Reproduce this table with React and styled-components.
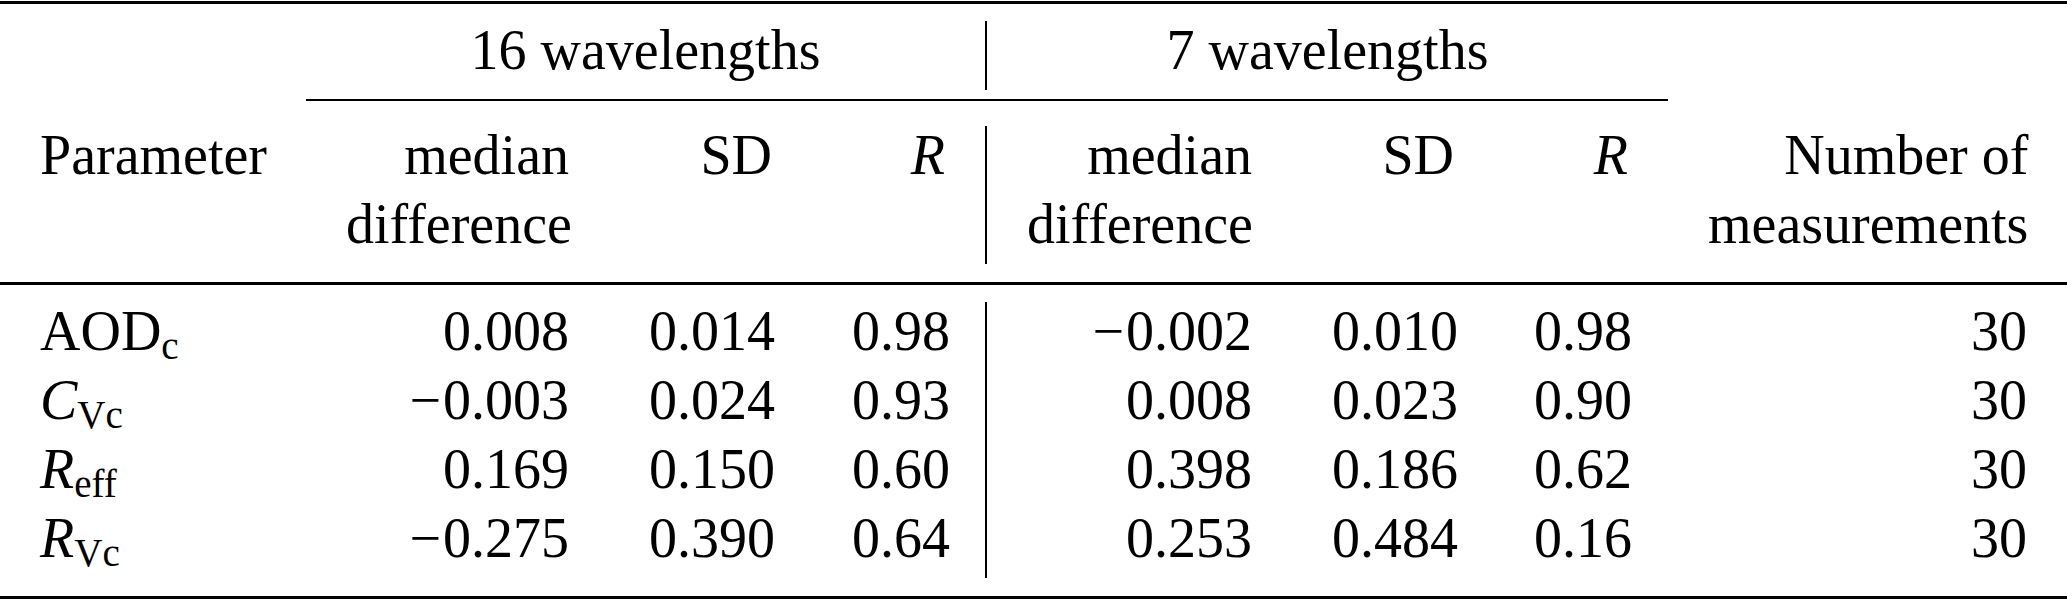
import styled, { createGlobalStyle } from 'styled-components'

const GlobalStyle = createGlobalStyle`
  html, body { margin:0; padding:0; background:#fff; }
  body { font-family:"Liberation Serif","Times New Roman",Times,serif; color:#000; }
`

const COLS = '306px 303px 203px 175px 305px 202px 174px 1fr'

const Table = styled.div`
  width:2067px;margin-top:1px;
  border-top:3px solid #000;border-bottom:3px solid #000;
  font-family:"Liberation Serif","Times New Roman",Times,serif;
  font-size:56px;
`
const Band = styled.div`
  display:grid;grid-template-columns:${COLS};
  padding:${p => p.$pad || '0'};
  border-bottom:${p => p.$rule ? '3px solid #000' : 'none'};
`
const Cell = styled.div`
  grid-column:${p => p.$span ? `span ${p.$span}` : 'auto'};
  padding:0 40px 11px;
  line-height:58px;
  text-align:${p => p.$align || 'right'};
  border-right:${p => p.$divider ? '2px solid #000' : 'none'};
  white-space:nowrap;
`
const Line = styled.div`
  & + & { margin-top:11px; }
`
const MidRule = styled.div`grid-column:2 / 8;height:2px;background:#000;`
const Var = styled.i`font-style:italic;`
const Sub = styled.sub`font-size:39px;line-height:0;vertical-align:-9px;`
const Minus = styled.span`margin-right:2px;`

const ROWS = [
  { key: 'aod', label: <>AOD<Sub>c</Sub></>, v: ['0.008', '0.014', '0.98', '-0.002', '0.010', '0.98', '30'] },
  { key: 'cvc', label: <><Var>C</Var><Sub>Vc</Sub></>, v: ['-0.003', '0.024', '0.93', '0.008', '0.023', '0.90', '30'] },
  { key: 'reff', label: <><Var>R</Var><Sub>eff</Sub></>, v: ['0.169', '0.150', '0.60', '0.398', '0.186', '0.62', '30'] },
  { key: 'rvc', label: <><Var>R</Var><Sub>Vc</Sub></>, v: ['-0.275', '0.390', '0.64', '0.253', '0.484', '0.16', '30'] },
]

const Num = ({ value }) =>
  value.startsWith('-') ? <><Minus>−</Minus>{value.slice(1)}</> : value

export default function App() {
  return (
    <>
      <GlobalStyle />
      <Table>
        <Band $pad="17px 0 9px">
          <Cell />
          <Cell $span={3} $align="center" $divider>16 wavelengths</Cell>
          <Cell $span={3} $align="center">7 wavelengths</Cell>
          <Cell />
        </Band>
        <Band><MidRule /></Band>
        <Band $pad="25px 0 18px" $rule>
          <Cell $align="left">Parameter</Cell>
          <Cell><Line>median</Line><Line>difference</Line></Cell>
          <Cell>SD</Cell>
          <Cell $divider><Var>R</Var></Cell>
          <Cell><Line>median</Line><Line>difference</Line></Cell>
          <Cell>SD</Cell>
          <Cell><Var>R</Var></Cell>
          <Cell><Line>Number of</Line><Line>measurements</Line></Cell>
        </Band>
        <Band $pad="17px 0 18px">
          {ROWS.map(r => [
            <Cell key={r.key} $align="left">{r.label}</Cell>,
            ...r.v.map((x, i) => (
              <Cell key={r.key + i} $divider={i === 2}><Num value={x} /></Cell>
            )),
          ])}
        </Band>
      </Table>
    </>
  )
}
